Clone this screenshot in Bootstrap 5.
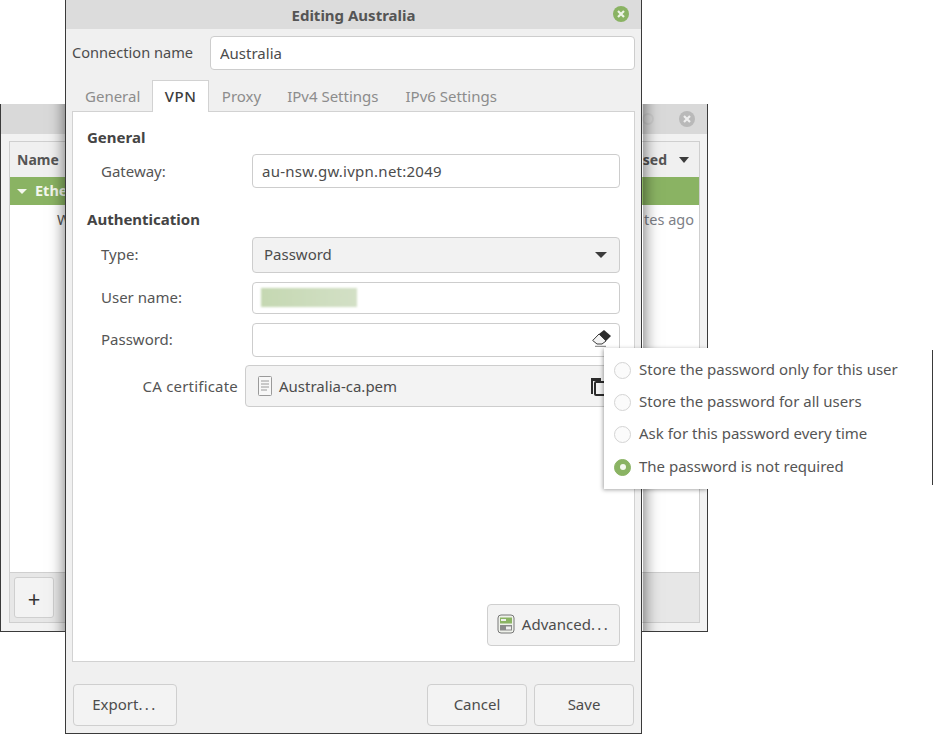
<!DOCTYPE html>
<html lang="en"><head><meta charset="utf-8"><title>Editing Australia</title>
<link href="https://cdn.jsdelivr.net/npm/bootstrap@5.3.0/dist/css/bootstrap.min.css" rel="stylesheet">
<style>
html,body{margin:0;background:#fff;}
body{width:934px;height:734px;overflow:hidden;position:relative;font-family:"Noto Sans","Open Sans",sans-serif;font-size:15px;color:#4c4c4c;}
.win-back{position:absolute;left:0;top:104px;width:708px;height:528px;background:#f2f2f2;border:1px solid #3a3a3a;border-top:0;overflow:hidden;display:flex;flex-direction:column;}
.shadow-caster{position:absolute;left:65px;top:-104px;width:577px;height:734px;box-shadow:0 0 14px 2px rgba(0,0,0,.5);}
.back-title{height:30px;background:#d9d9d9;flex:none;}
.back-frame{margin:7px 7px 8px 8px;border:1px solid #cfcfcf;flex:1;background:#fff;display:flex;flex-direction:column;}
.back-head{height:35px;background:#f0f0f0;font-weight:700;font-size:14px;color:#555;padding:0 10px 0 7px;flex:none;}
.back-sel{height:28px;background:#8ab363;color:#f4f8ee;font-weight:700;font-size:14.5px;padding-left:7px;flex:none;}
.back-row{height:30px;padding:0 5px 0 47px;color:#7d8087;flex:none;font-size:14.5px;}
.wired{color:#555;}
.back-tool{height:50px;background:#e7e7e7;border-top:1px solid #cfcfcf;padding:4px;flex:none;margin-top:auto;}
.tool-btn{width:40px;height:41px;padding:0;border:1px solid #cfcfcf;background:#f3f3f3;border-radius:3px;font-size:22px;line-height:1;color:#333;}
.win-front{position:absolute;left:65px;top:0;width:577px;height:734px;background:#f0f0f0;border:1px solid #3a3a3a;border-width:0 1px 1px 1px;display:flex;flex-direction:column;}
.front-title{height:29px;background:#dcdcdc;font-weight:700;color:#555;flex:none;position:relative;padding-top:1px;}
.front-close{position:absolute;right:11px;top:5px;}
.conn-row{padding:7px 6px 0 6px;height:51px;flex:none;}
.conn-label{width:138px;flex:none;color:#4c4c4c;font-size:14.6px;}
.gtk-input.form-control{height:34px;padding:0 12px 2px 9px;font-size:15px;color:#4c4c4c;border:1px solid #cdcdcd;border-radius:4px;background:#fff;box-shadow:none;font-family:inherit;}
.conn-row .gtk-input.form-control{padding-bottom:0;}
.wide-val.form-control{letter-spacing:.25px;}
.gtk-tabs.nav-tabs{margin:0 6px;border:0;height:31px;flex:none;padding-left:0;gap:0;}
.gtk-tabs .nav-link{border:1px solid transparent;border-bottom:0;border-radius:0;color:#8c8c8c;padding:0 12px;height:31px;line-height:30px;margin:0;background:none;}
.gtk-tabs .nav-link.active{background:#fff;border-color:#d2d2d2;color:#3c3c3c;font-weight:500;letter-spacing:.5px;position:relative;z-index:1;height:32px;margin-left:-1px;padding:0 11.5px;}
.gtk-tabs .tab-last{margin-left:1px;}
.gtk-page{margin:0 6px;height:551px;background:#fff;border:1px solid #d2d2d2;flex:none;padding:15px 14px 15px 14px;display:flex;flex-direction:column;position:relative;}
.sect-title{font-weight:700;color:#444;line-height:20px;}
.form-line{display:flex;align-items:center;}
.form-line .lbl{width:165px;padding:0 0 2px 14px;flex:none;color:#555;}
.form-line .gtk-input{width:368px;flex:none;}
.gw-line{margin-top:7px;}
.gw-line .lbl.lbl{padding-bottom:0;}
.gw-line .gtk-input.form-control{padding-bottom:0;}
.gtk-combo{width:368px;height:36px;background:#f2f2f2;border:1px solid #cdcdcd;border-radius:4px;padding:0 12px 0 11px;}
.gtk-combo span{padding-bottom:2px;}
.tri{width:0;height:0;border-left:6px solid transparent;border-right:6px solid transparent;border-top:6px solid #3c3c3c;display:inline-block;}
.tri-small{border-width:6px 5px 0;}
.blur-name{position:absolute;left:9px;top:6px;width:96px;height:19px;background:linear-gradient(90deg,#c5d8b2,#d3e0c6);filter:blur(1.2px);}
.pw-eraser{position:absolute;right:9px;top:7px;}
.ca-line{margin-top:8px;display:flex;align-items:center;}
.ca-label{width:151px;text-align:right;flex:none;color:#555;letter-spacing:.2px;}
.ca-btn{width:366px;height:42px;margin-left:7px;background:#f3f3f3;border:1px solid #cdcdcd;border-radius:4px;padding:0 4px 0 12px;flex:none;}
.ca-name{gap:7px;}
.gtk-btn.btn{background:#f3f3f3;border:1px solid #cfcfcf;border-radius:4px;color:#4c4c4c;font-size:15px;padding:0 0 2px;height:42px;box-shadow:none;}
.dots{letter-spacing:2.4px;}
.adv{width:133px;margin-top:auto;align-self:flex-end;gap:7px;}
.foot{padding:22px 7px 0 7px;}
.w-export{width:104px;}.w-cancel{width:100px;}.w-save{width:100px;}
.pw-pop{position:absolute;left:604px;top:348px;width:329px;height:141px;background:#fff;padding:6px 0 0 10px;z-index:5;}
.pw-pop::before{content:"";position:absolute;left:0;top:0;width:104px;height:100%;box-shadow:-1px 1px 4px rgba(0,0,0,.35);clip-path:inset(-10px 0 -10px -10px);}
.pw-opt{height:32.3px;gap:8px;color:#555;position:relative;}
.pw-opt span:last-child{padding-bottom:2px;}
.pw-radio{width:17px;height:17px;border-radius:50%;border:1px solid #d4d4d4;background:#fbfbfb;flex:none;display:flex;align-items:center;justify-content:center;}
.pw-radio.on{background:#8ab363;border-color:#8ab363;}
.pw-radio.on::after{content:"";width:6px;height:6px;border-radius:50%;background:#f4f8ee;}
.edge-line{position:absolute;left:932px;top:350px;width:1px;height:135px;background:#3a3a3a;z-index:6;}
</style></head>
<body>
<div class="win-back">
  <div class="shadow-caster"></div>
  <div class="back-title d-flex align-items-center justify-content-end">
    <svg class="me-2" width="16" height="16" viewBox="0 0 16 16"><circle cx="8" cy="8" r="5" fill="none" stroke="#cfcfcf" stroke-width="2"/></svg>
    <svg style="margin:0 11px 0 14px" width="18" height="18" viewBox="0 0 18 18"><circle cx="9" cy="9" r="8" fill="#b9b9b9"/><path d="M6 6l6 6M12 6l-6 6" stroke="#eee" stroke-width="2.2"/></svg>
  </div>
  <div class="back-frame">
    <div class="back-head d-flex align-items-center justify-content-between"><span>Name</span><span class="d-flex align-items-center gap-2">sed <i class="tri tri-small ms-1"></i></span></div>
    <div class="back-sel d-flex align-items-center gap-2"><i class="tri" style="border-top-color:#f4f8ee;border-width:5px 5px 0"></i><span>Ethe</span></div>
    <div class="back-row d-flex align-items-center justify-content-between"><span class="wired">W</span><span>tes ago</span></div>
    <div class="back-tool"><button class="btn tool-btn" type="button">+</button></div>
  </div>
</div>

<div class="win-front">
  <div class="front-title d-flex align-items-center justify-content-center">Editing Australia
    <svg class="front-close" width="18" height="18" viewBox="0 0 18 18"><circle cx="9" cy="9" r="8" fill="#8ab363"/><path d="M6 6l6 6M12 6l-6 6" stroke="#eef4e6" stroke-width="2.2"/></svg>
  </div>
  <div class="conn-row d-flex align-items-start">
    <span class="conn-label lh-base" style="margin-top:6px">Connection name</span>
    <input class="form-control gtk-input" value="Australia" aria-label="Connection name">
  </div>
  <ul class="nav nav-tabs gtk-tabs">
    <li class="nav-item"><a class="nav-link" href="#">General</a></li>
    <li class="nav-item"><a class="nav-link active" href="#">VPN</a></li>
    <li class="nav-item"><a class="nav-link" href="#">Proxy</a></li>
    <li class="nav-item"><a class="nav-link" href="#">IPv4 Settings</a></li>
    <li class="nav-item"><a class="nav-link tab-last" href="#">IPv6 Settings</a></li>
  </ul>
  <div class="gtk-page">
    <div class="sect-title">General</div>
    <div class="form-line gw-line"><span class="lbl">Gateway:</span><input class="form-control gtk-input wide-val" value="au-nsw.gw.ivpn.net:2049" aria-label="Gateway"></div>
    <div class="sect-title" style="margin-top:21px">Authentication</div>
    <div class="form-line" style="margin-top:8px"><span class="lbl">Type:</span><div class="gtk-combo d-flex align-items-center justify-content-between"><span>Password</span><i class="tri"></i></div></div>
    <div class="form-line" style="margin-top:9px"><span class="lbl">User name:</span><div class="position-relative"><input class="form-control gtk-input" style="height:32px" aria-label="User name"><div class="blur-name"></div></div></div>
    <div class="form-line" style="margin-top:9px"><span class="lbl">Password:</span><div class="position-relative"><input class="form-control gtk-input" aria-label="Password">
      <svg class="pw-eraser" width="19" height="17" viewBox="0 0 19 17"><path d="M7 4l5-4 7 6-5 5z" fill="#2c2c2c"/><path d="M7 4L.7 10.5 5 14h5l4-3z" fill="#f4f4f4" stroke="#3c3c3c"/><path d="M3 16.3h11" stroke="#777"/></svg></div></div>
    <div class="ca-line"><span class="ca-label">CA certificate</span>
      <div class="ca-btn d-flex align-items-center justify-content-between">
        <span class="ca-name d-flex align-items-center"><svg width="14" height="20" viewBox="0 0 14 20"><rect x=".5" y=".5" width="13" height="19" rx="1" fill="#f7f7f7" stroke="#9a9a9a"/><path d="M3 5h8M3 8h8M3 11h8M3 14h6" stroke="#9a9a9a"/></svg>Australia-ca.pem</span>
        <svg width="16" height="20" viewBox="0 0 16 20"><path d="M1 2h10v3H3v13H1z" fill="#2c2c2c"/><rect x="5" y="6" width="10" height="13" rx="1" fill="#f3f3f3" stroke="#2c2c2c" stroke-width="2"/></svg>
      </div>
    </div>
    <button class="btn gtk-btn adv d-flex align-items-center justify-content-center" type="button">
      <svg width="18" height="20" viewBox="0 0 18 20"><rect x="1" y="1" width="16" height="18" rx="3" fill="#eef1ea" stroke="#777"/><rect x="3" y="3.5" width="12" height="6" fill="#8ab363"/><rect x="3" y="11" width="12" height="5.5" fill="#8a8a8a"/><rect x="9" y="12.5" width="5" height="3" fill="#eee"/><rect x="4" y="5" width="5" height="2" fill="#eee"/></svg><span>Advanced<span class="dots">...</span></span></button>
  </div>
  <div class="foot d-flex">
    <button class="btn gtk-btn w-export" type="button">Export<span class="dots">...</span></button>
    <button class="btn gtk-btn w-cancel ms-auto" type="button">Cancel</button>
    <button class="btn gtk-btn w-save" style="margin-left:7px" type="button">Save</button>
  </div>
</div>

<div class="pw-pop">
  <div class="pw-opt d-flex align-items-center"><span class="pw-radio"></span><span>Store the password only for this user</span></div>
  <div class="pw-opt d-flex align-items-center"><span class="pw-radio"></span><span>Store the password for all users</span></div>
  <div class="pw-opt d-flex align-items-center"><span class="pw-radio"></span><span>Ask for this password every time</span></div>
  <div class="pw-opt d-flex align-items-center"><span class="pw-radio on"></span><span>The password is not required</span></div>
</div>
<div class="edge-line"></div>
<script src="https://cdn.jsdelivr.net/npm/bootstrap@5.3.0/dist/js/bootstrap.bundle.min.js"></script>
</body></html>
